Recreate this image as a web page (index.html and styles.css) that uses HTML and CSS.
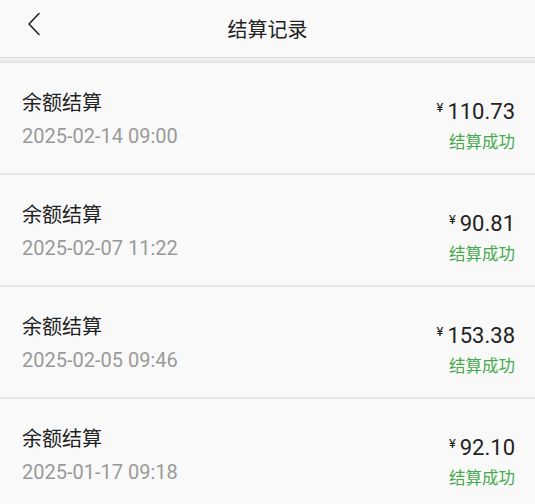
FILE: index.html
```html
<!DOCTYPE html>
<html lang="zh">
<head>
<meta charset="utf-8">
<title>结算记录</title>
<link rel="stylesheet" href="styles.css">
</head>
<body>
<div class="page">
  <header class="nav">
    <span class="back">
      <svg width="14" height="24" viewBox="0 0 14 24"><path d="M12 1.5 L2 12 L12 22.5" fill="none" stroke="#222" stroke-width="1.6" stroke-linecap="round" stroke-linejoin="round"/></svg>
    </span>
    <h1 class="title">结算记录</h1>
  </header>
  <div class="nav-sep"></div>
  <ul class="list">
    <li class="row">
      <div class="left"><div class="name">余额结算</div><div class="date">2025-02-14 09:00</div></div>
      <div class="right"><div class="amount"><span class="yen">¥</span>110.73</div><div class="status">结算成功</div></div>
    </li>
    <li class="row">
      <div class="left"><div class="name">余额结算</div><div class="date">2025-02-07 11:22</div></div>
      <div class="right"><div class="amount"><span class="yen">¥</span>90.81</div><div class="status">结算成功</div></div>
    </li>
    <li class="row">
      <div class="left"><div class="name">余额结算</div><div class="date">2025-02-05 09:46</div></div>
      <div class="right"><div class="amount"><span class="yen">¥</span>153.38</div><div class="status">结算成功</div></div>
    </li>
    <li class="row">
      <div class="left"><div class="name">余额结算</div><div class="date">2025-01-17 09:18</div></div>
      <div class="right"><div class="amount"><span class="yen">¥</span>92.10</div><div class="status">结算成功</div></div>
    </li>
  </ul>
</div>
</body>
</html>
```
FILE: styles.css
```css
* { box-sizing: border-box; }
html, body { margin: 0; padding: 0; background: #f9f9f9; }
body {
  font-family: Roboto, "Noto Sans CJK SC", sans-serif;
  color: #222;
  width: 535px;
  height: 504px;
  overflow: hidden;
}
.nav {
  height: 57px;
  display: flex;
  align-items: center;
  justify-content: center;
  position: relative;
}
.back {
  position: absolute;
  left: 27px;
  top: 12px;
  display: flex;
}
.title {
  margin: 0;
  font-size: 20px;
  font-weight: 400;
  color: #222;
}
.nav-sep {
  height: 6px;
  border-top: 1px solid #dedede;
  border-bottom: 2px solid #e4e4e4;
  background: #efefef;
}
.list { list-style: none; margin: 0; padding: 0; }
.row {
  height: 112px;
  border-bottom: 2px solid #e6e6e6;
  display: flex;
  justify-content: space-between;
  align-items: flex-start;
  padding: 0 20px 0 22px;
}
.left { padding-top: 26px; }
.name {
  font-size: 20px;
  line-height: 28px;
  color: #222;
}
.date {
  margin-top: 5px;
  font-size: 20px;
  line-height: 28px;
  color: #999;
}
.right {
  padding-top: 31px;
  display: flex;
  flex-direction: column;
  align-items: flex-end;
}
.amount {
  font-size: 22px;
  line-height: 28px;
  color: #222;
}
.yen {
  font-size: 13px;
  vertical-align: 7px;
  margin-right: 4px;
}
.status {
  margin-top: 6px;
  font-size: 16.5px;
  line-height: 22px;
  color: #45a94c;
}
```
